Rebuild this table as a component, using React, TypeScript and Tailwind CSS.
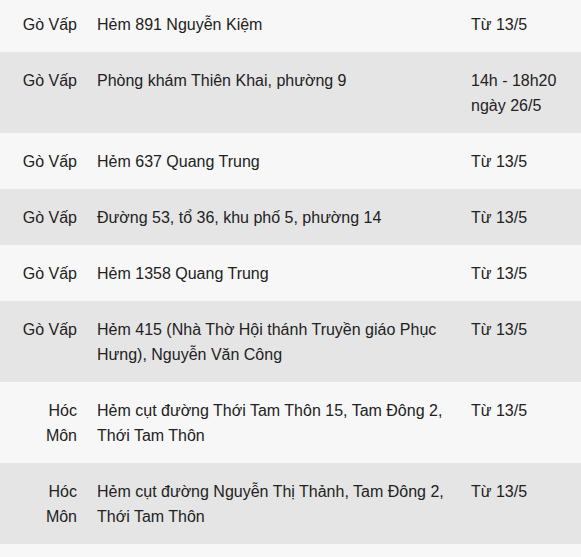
import React from "react";

const rows: [string, string, string][] = [
  ["Gò Vấp", "Hẻm 891 Nguyễn Kiệm", "Từ 13/5"],
  ["Gò Vấp", "Phòng khám Thiên Khai, phường 9", "14h - 18h20 ngày 26/5"],
  ["Gò Vấp", "Hẻm 637 Quang Trung", "Từ 13/5"],
  ["Gò Vấp", "Đường 53, tổ 36, khu phố 5, phường 14", "Từ 13/5"],
  ["Gò Vấp", "Hẻm 1358 Quang Trung", "Từ 13/5"],
  ["Gò Vấp", "Hẻm 415 (Nhà Thờ Hội thánh Truyền giáo Phục Hưng), Nguyễn Văn Công", "Từ 13/5"],
  ["Hóc Môn", "Hẻm cụt đường Thới Tam Thôn 15, Tam Đông 2, Thới Tam Thôn", "Từ 13/5"],
  ["Hóc Môn", "Hẻm cụt đường Nguyễn Thị Thảnh, Tam Đông 2, Thới Tam Thôn", "Từ 13/5"],
];

export default function App() {
  return (
    <div
      className="h-[557px] w-[581px] overflow-hidden bg-[#f7f7f7] text-[16px] leading-[25px] text-[#222222]"
      style={{ fontFamily: '"Liberation Sans", Arial, sans-serif' }}
    >
      <div className="-mt-[4px]">
        {rows.map((r, i) => (
          <div
            key={i}
            className={`grid grid-cols-[87px_374px_120px] ${i % 2 === 0 ? "bg-[#f7f7f7]" : "bg-[#e5e5e5]"}`}
          >
            <div className="pt-[16px] pb-[15px] pl-[20px] pr-[10px] text-right">{r[0]}</div>
            <div className="pt-[16px] pb-[15px] px-[10px]">{r[1]}</div>
            <div className="pt-[16px] pb-[15px] px-[10px]">{r[2]}</div>
          </div>
        ))}
      </div>
    </div>
  );
}
